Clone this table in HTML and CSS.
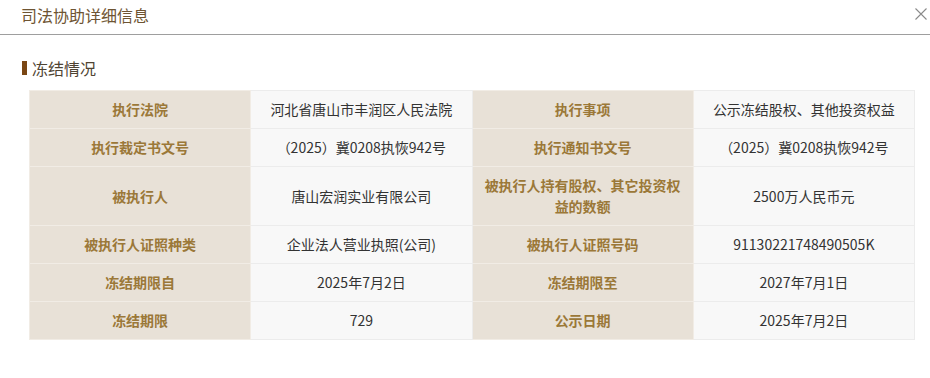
FILE: index.html
```html
<!DOCTYPE html>
<html lang="zh-CN">
<head>
<meta charset="utf-8">
<title>司法协助详细信息</title>
<link rel="stylesheet" href="styles.css">
</head>
<body>
<div class="dialog">
  <div class="dialog-header">
    <span class="dialog-title">司法协助详细信息</span>
    <svg class="close" width="12" height="12" viewBox="0 0 12 12"><path d="M0.5 0.5 L11.5 11.5 M11.5 0.5 L0.5 11.5" stroke="#8a8a8a" stroke-width="1.1" fill="none"/></svg>
  </div>
  <div class="section">
    <h3 class="section-title"><span class="bar"></span>冻结情况</h3>
    <table class="info">
      <tr>
        <th>执行法院</th><td>河北省唐山市丰润区人民法院</td>
        <th>执行事项</th><td>公示冻结股权、其他投资权益</td>
      </tr>
      <tr>
        <th>执行裁定书文号</th><td>（2025）冀0208执恢942号</td>
        <th>执行通知书文号</th><td>（2025）冀0208执恢942号</td>
      </tr>
      <tr class="tall">
        <th>被执行人</th><td>唐山宏润实业有限公司</td>
        <th>被执行人持有股权、其它投资权益的数额</th><td>2500万人民币元</td>
      </tr>
      <tr>
        <th>被执行人证照种类</th><td>企业法人营业执照(公司)</td>
        <th>被执行人证照号码</th><td>91130221748490505K</td>
      </tr>
      <tr>
        <th>冻结期限自</th><td>2025年7月2日</td>
        <th>冻结期限至</th><td>2027年7月1日</td>
      </tr>
      <tr>
        <th>冻结期限</th><td>729</td>
        <th>公示日期</th><td>2025年7月2日</td>
      </tr>
    </table>
  </div>
</div>
</body>
</html>
```
FILE: styles.css
```css
html, body {
  margin: 0;
  padding: 0;
  background: #ffffff;
  font-family: "Microsoft YaHei", "Noto Sans CJK SC", "Noto Sans", sans-serif;
}
.dialog {
  width: 930px;
}
.dialog-header {
  display: flex;
  align-items: center;
  justify-content: space-between;
  height: 30px;
  padding: 0 3px 4px 21px;
  border-bottom: 1px solid #9e9e9e;
}
.dialog-title {
  font-size: 16px;
  line-height: 30px;
  color: #6e5432;
}
.close {
  display: block;
  margin-top: -2px;
}
.section {
  padding: 22px 15px 0 22px;
}
.section-title {
  display: flex;
  align-items: center;
  margin: 0 0 11px 0;
  font-size: 16px;
  font-weight: normal;
  line-height: 22px;
  color: #4f4332;
}
.bar {
  display: inline-block;
  width: 5px;
  height: 14px;
  background: #7a4714;
  margin-right: 5px;
}
.info {
  margin-left: 7px;
  width: 886px;
  border-collapse: collapse;
  table-layout: fixed;
  font-size: 14px;
  line-height: 21px;
}
.info th, .info td {
  padding: 8px 12px;
  text-align: center;
  border: 1px solid #f2efeb;
  height: 21px;
}
.info th {
  background: #e8e1d7;
  color: #9b7838;
  font-weight: bold;
  border-color: #f1ece5;
}
.info td {
  background: #f8f8f8;
  color: #333333;
  border-color: #ececec;
}
.info tr.tall th, .info tr.tall td {
  height: 42px;
}
```
